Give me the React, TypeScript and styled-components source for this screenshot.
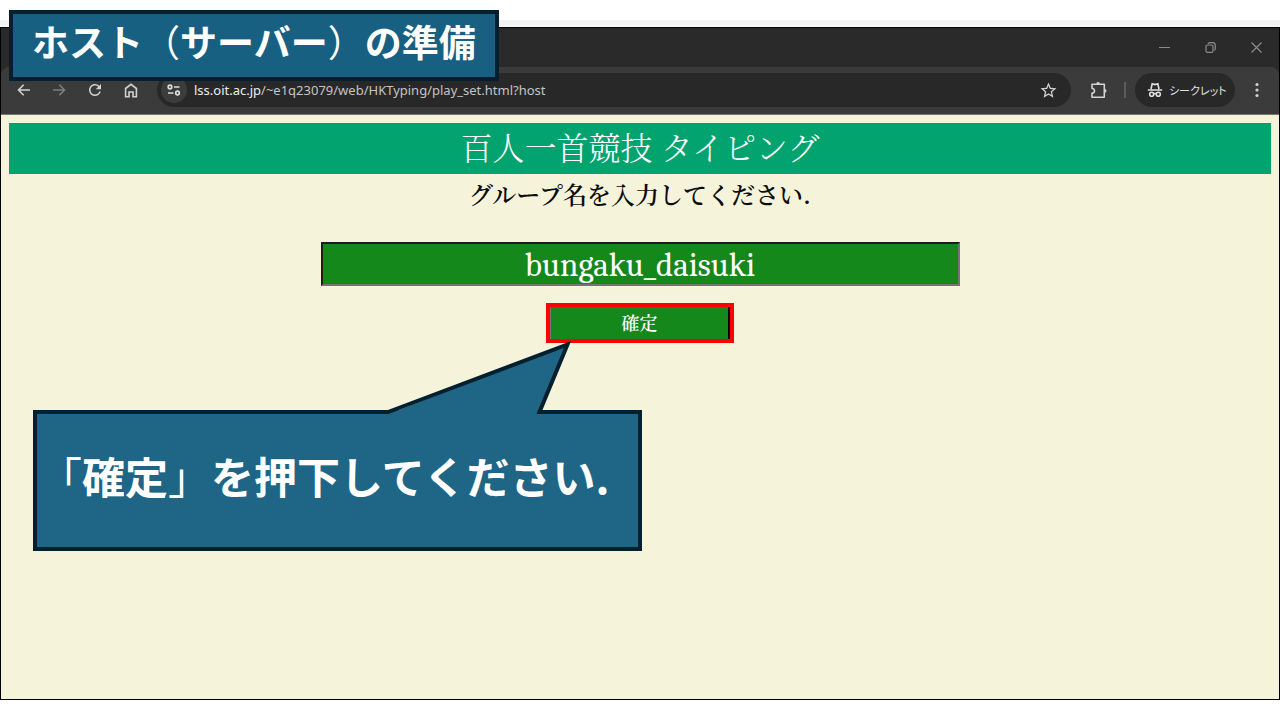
import React, { useState } from "react";
import styled, { createGlobalStyle } from "styled-components";
import { MdRefresh, MdStarBorder } from "react-icons/md";

const GlobalStyle = createGlobalStyle`
  * { box-sizing: border-box; }
  body { margin: 0; background: #fff; }
  button, input { font: inherit; margin: 0; }
`;

const navy = "#04202f";
const serif = `"Noto Serif CJK JP", "Noto Sans CJK JP", serif`;
const sans = `"Noto Sans CJK JP", sans-serif`;

const Slide = styled.div`
  position: relative;
  min-height: 100vh;
  display: flex;
  flex-direction: column;
  padding: 20px 0;
  overflow: hidden;
`;

const TopStrip = styled.div`
  height: 7px;
  background: #f3f3f3;
  border-bottom: 1px solid #fff;
`;

const BrowserWindow = styled.section`
  flex: 1;
  display: flex;
  flex-direction: column;
  border: 1px solid #000;
  background: #2a2a2a;
`;

const TitleBar = styled.div`
  height: 39px;
  display: flex;
  justify-content: flex-end;
  align-items: center;
`;

const WindowButton = styled.button`
  width: 46px;
  height: 39px;
  padding: 0;
  border: 0;
  background: none;
  color: #8c8c8c;
  display: flex;
  align-items: center;
  justify-content: center;
`;

const Toolbar = styled.div`
  height: 48px;
  display: flex;
  align-items: center;
  padding: 0 4px 1px;
  background: #3b3b3b;
  border-bottom: 1px solid #77776f;
  border-radius: 8px 8px 0 0;
`;

const ToolButton = styled.button<{ $dim?: boolean }>`
  width: 36px;
  height: 34px;
  padding: 0;
  border: 0;
  background: none;
  flex: none;
  display: flex;
  align-items: center;
  justify-content: center;
  color: ${(p) => (p.$dim ? "#7d7d7d" : "#d2d2d2")};
`;

const AddressBar = styled.div`
  flex: 1;
  height: 34px;
  margin: 0 10px 0 8px;
  padding: 0 5px 0 4px;
  display: flex;
  align-items: center;
  border-radius: 17px;
  background: #282828;
`;

const SiteInfo = styled.button`
  width: 26px;
  height: 26px;
  padding: 0;
  border: 0;
  border-radius: 13px;
  background: #3c3c3c;
  color: #dcdcdc;
  display: flex;
  align-items: center;
  justify-content: center;
`;

const Address = styled.div`
  flex: 1;
  margin-left: 7px;
  font: 13px/20px "Noto Sans", sans-serif;
  color: #c4c4c4;
`;

const Host = styled.span`
  color: #eee;
`;

const Divider = styled.span`
  width: 2px;
  height: 16px;
  margin: 0 9px 0 7px;
  background: #5c5c5c;
`;

const Incognito = styled.button`
  width: 100px;
  height: 34px;
  margin-right: 4px;
  padding: 0 12px;
  border: 0;
  border-radius: 17px;
  background: #282828;
  color: #e0e0e0;
  display: flex;
  align-items: center;
  gap: 6px;
  font: 11px/20px ${sans};
  font-feature-settings: "palt";
  white-space: nowrap;

  svg {
    flex: none;
  }
`;

const Page = styled.main`
  flex: 1;
  background: #f5f4db;
  padding-top: 8px;
  display: flex;
  flex-direction: column;
  align-items: center;
  font-family: ${serif};
`;

const PageTitle = styled.h1`
  align-self: stretch;
  margin: 0 8px;
  padding-bottom: 5px;
  background: #02a36e;
  color: #fff;
  font-size: 32px;
  line-height: 46px;
  font-weight: 300;
  text-align: center;
`;

const Form = styled.form`
  width: 100%;
  display: flex;
  flex-direction: column;
  align-items: center;
`;

const FieldLabel = styled.label`
  font-size: 24px;
  line-height: 40px;
  color: #0c0c0c;
  font-weight: 600;
`;

const GroupField = styled.input`
  width: 50%;
  height: 44px;
  margin-top: 28px;
  padding: 2px 0 0;
  border: 2px solid;
  border-color: #1c1c1c #77717a #77717a #1c1c1c;
  background: #15881b;
  color: #fff;
  font-family: Cambria, Caladea, "Liberation Serif", serif;
  font-size: 33px;
  text-align: center;
`;

const ConfirmButton = styled.button`
  width: 180px;
  height: 32px;
  margin-top: 21px;
  padding: 0 0 2px;
  border: 0;
  border-left: 1px solid #777;
  border-right: 2px solid #000;
  outline: 4px solid #f00;
  background: #15881b;
  color: #fff;
  font-size: 18px;
  line-height: 30px;
  font-weight: 600;
`;

const Banner = styled.h2`
  position: absolute;
  left: 9px;
  top: 10px;
  height: 71px;
  margin: 0;
  padding: 0 19px;
  border: 4px solid ${navy};
  background: #176082;
  color: #fff;
  font: bold 37px/54px ${sans};
  white-space: nowrap;
`;

const Callout = styled.div`
  position: absolute;
  left: 33px;
  top: 410px;
  width: 609px;
  height: 141px;
  border: 4px solid ${navy};
  background: #1e6586;
  color: #fff;
`;

const CalloutTail = styled.svg`
  position: absolute;
  left: 347px;
  top: -78px;
  overflow: visible;
`;

const CalloutText = styled.p`
  margin: 0;
  padding-left: 2px;
  font: bold 43px/122px ${sans};
  white-space: nowrap;
`;

const Thin = styled.span`
  font-weight: 400;
`;

const line = { fill: "none", stroke: "currentColor" };

export default function App() {
  const [group, setGroup] = useState("bungaku_daisuki");
  return (
    <Slide lang="ja">
      <GlobalStyle />
      <TopStrip />
      <BrowserWindow>
        <TitleBar>
          <WindowButton aria-label="最小化">
            <svg width="11" height="11" {...line}><path d="M0 5.5h11" /></svg>
          </WindowButton>
          <WindowButton aria-label="元に戻す">
            <svg width="11" height="11" {...line} strokeWidth="1.2">
              <rect x="1" y="3" width="7" height="7.3" rx="1.6" />
              <path d="M3 1.6Q3.5.7 5 .7h2.500Q10.300.7 10.300 3.500v3Q10.300 8 9.300 8.500" />
            </svg>
          </WindowButton>
          <WindowButton aria-label="閉じる">
            <svg width="11" height="11" {...line} strokeWidth="1.2"><path d="M.5.5l10 10M10.500.5l-10 10" /></svg>
          </WindowButton>
        </TitleBar>
        <Toolbar>
          <ToolButton aria-label="戻る">
            <svg width="13" height="12" {...line} strokeWidth="1.6"><path d="M13 6H1.500M6.700.8L1.500 6l5.200 5.200" /></svg>
          </ToolButton>
          <ToolButton aria-label="進む" $dim>
            <svg width="13" height="12" {...line} strokeWidth="1.6"><path d="M0 6h11.500M6.300.8L11.500 6l-5.200 5.200" /></svg>
          </ToolButton>
          <ToolButton aria-label="再読み込み"><MdRefresh size={18} /></ToolButton>
          <ToolButton aria-label="ホーム">
            <svg width="14" height="15" {...line} strokeWidth="1.6">
              <path d="M1.600 5.500L7 1.300l5.400 4.200v8.200H9V9H5v4.700H1.600z" />
            </svg>
          </ToolButton>
          <AddressBar>
            <SiteInfo aria-label="サイト情報">
              <svg width="14" height="12" {...line} strokeWidth="1.700">
                <circle cx="3" cy="3" r="1.800" /><path d="M7 3h5.500M1 9h5.500" /><circle cx="10.500" cy="9" r="1.800" />
              </svg>
            </SiteInfo>
            <Address><Host>lss.oit.ac.jp</Host>/~e1q23079/web/HKTyping/play_set.html?host</Address>
            <ToolButton aria-label="ブックマーク"><MdStarBorder size={19} /></ToolButton>
          </AddressBar>
          <ToolButton aria-label="拡張機能">
            <svg width="18" height="18" {...line} strokeWidth="1.600" strokeLinejoin="round">
              <path d="M2 3.300h12.300v12.900H2v-3.800q2.500-.6 2.500-2.600T2 7.200z" />
              <path d="M6.200 3a1.900 1.900 0 013.800 0zM14.600 7.900a1.900 1.900 0 010 3.800z" fill="currentColor" stroke="none" />
            </svg>
          </ToolButton>
          <Divider />
          <Incognito>
            <svg width="16" height="16" viewBox="0 0 16 16" {...line} strokeWidth="1.600">
              <path d="M4 7l1.200-5.200 2.800.8 2.800-.8L12 7M.8 8h14.400" />
              <circle cx="4.700" cy="12.200" r="2" /><circle cx="11.300" cy="12.200" r="2" /><path d="M6.700 11.800q1.300-.7 2.600 0" />
            </svg>
            シークレット
          </Incognito>
          <ToolButton aria-label="メニュー">
            <svg width="4" height="16" fill="currentColor">
              <circle cx="2" cy="2.500" r="1.600" /><circle cx="2" cy="8" r="1.600" /><circle cx="2" cy="13.500" r="1.600" />
            </svg>
          </ToolButton>
        </Toolbar>
        <Page>
          <PageTitle>百人一首競技 タイピング</PageTitle>
          <Form onSubmit={(e) => e.preventDefault()}>
            <FieldLabel htmlFor="group">グループ名を入力してください.</FieldLabel>
            <GroupField id="group" value={group} onChange={(e) => setGroup(e.target.value)} />
            <ConfirmButton type="submit">確定</ConfirmButton>
          </Form>
        </Page>
      </BrowserWindow>
      <Banner>ホスト<Thin>（</Thin>サーバー<Thin>）</Thin>の準備</Banner>
      <Callout>
        <CalloutTail width="170" height="84" aria-hidden="true">
          <path d="M4 78L184 9L156 78V82H4z" fill="#1e6586" />
          <path d="M4 76L183.500 8.500L155.500 76H170" fill="none" stroke={navy} strokeWidth="4" />
        </CalloutTail>
        <CalloutText><Thin>「</Thin>確定<Thin>」</Thin>を押下してください.</CalloutText>
      </Callout>
    </Slide>
  );
}
